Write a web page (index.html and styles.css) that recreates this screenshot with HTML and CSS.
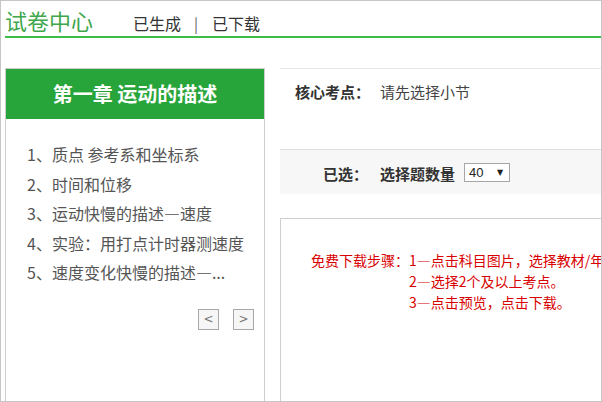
FILE: index.html
```html
<!DOCTYPE html>
<html lang="zh-CN">
<head>
<meta charset="utf-8">
<title>试卷中心</title>
<link rel="stylesheet" href="styles.css">
</head>
<body>
<div class="frame">
  <div class="header">
    <span class="brand">试卷中心</span>
    <a class="nav-link">已生成</a>
    <span class="sep">|</span>
    <a class="nav-link">已下载</a>
  </div>
  <div class="main">
    <div class="chapter">
      <div class="chapter-title">第一章 运动的描述</div>
      <ul class="sections">
        <li>1、质点 参考系和坐标系</li>
        <li>2、时间和位移</li>
        <li>3、运动快慢的描述—速度</li>
        <li>4、实验：用打点计时器测速度</li>
        <li>5、速度变化快慢的描述—...</li>
      </ul>
      <div class="pager">
        <span class="page-btn">&lt;</span>
        <span class="page-btn">&gt;</span>
      </div>
    </div>
    <div class="content">
      <div class="points">
        <span class="label">核心考点：</span>
        <span class="value">请先选择小节</span>
      </div>
      <div class="selected">
        <span class="label">已选：</span>
        <span class="label count">选择题数量</span>
        <span class="select"><span>40</span><span class="arrow">▼</span></span>
      </div>
      <div class="result">
        <div class="steps">
          <span class="steps-title">免费下载步骤：</span>
          <div class="steps-list">
            <div>1—点击科目图片，选择教材/年级，选择章节。</div>
            <div>2—选择2个及以上考点。</div>
            <div>3—点击预览，点击下载。</div>
          </div>
        </div>
      </div>
    </div>
  </div>
</div>
</body>
</html>
```

FILE: styles.css
```css
* { box-sizing: border-box; }
html, body { margin: 0; padding: 0; background: #fff; }
body {
  font-family: "Noto Sans CJK SC", "Noto Sans", sans-serif;
  color: #333;
}
.frame {
  width: 602px;
  height: 402px;
  border: 1px solid #c6c6c6;
  overflow: hidden;
}
.header {
  margin-left: 4px;
  height: 37px;
  padding-top: 4px;
  border-bottom: 2px solid #3dbd46;
  display: flex;
  align-items: baseline;
}
.brand {
  font-size: 22px;
  line-height: 30px;
  color: #3ea64b;
}
.nav-link {
  font-size: 16px;
  color: #333;
  line-height: 30px;
}
.brand + .nav-link { margin-left: 40px; }
.sep {
  font-size: 15px;
  color: #666;
  margin: 0 14px 0 13px;
}
.main {
  display: flex;
  margin-top: 30px;
  margin-left: 4px;
}
.chapter {
  width: 260px;
  flex-shrink: 0;
  border: 1px solid #cdcdcd;
}
.chapter-title {
  height: 50px;
  line-height: 50px;
  background: #28a53a;
  color: #fff;
  font-size: 20px;
  font-weight: bold;
  text-align: center;
}
.sections {
  list-style: none;
  margin: 0;
  padding: 21px 0 0 21px;
}
.sections li {
  font-size: 16px;
  line-height: 29.5px;
  height: 29.5px;
  color: #555;
  white-space: nowrap;
}
.pager {
  display: flex;
  justify-content: flex-end;
  gap: 14px;
  padding: 21.5px 10px 11px 0;
}
.page-btn {
  width: 21px;
  height: 21px;
  border: 1px solid #a8a8a8;
  background: #f6f6f6;
  color: #777;
  font-size: 12px;
  line-height: 19px;
  text-align: center;
  font-family: "DejaVu Sans", sans-serif;
}
.content {
  margin-left: 15px;
  width: 420px;
  flex-shrink: 0;
}
.points {
  height: 81px;
  border-top: 1px solid #e6e6e6;
  padding: 13px 0 0 15px;
  display: flex;
  line-height: 20px;
  font-size: 15px;
}
.points .label { font-weight: bold; color: #333; width: 85px; }
.points .value { color: #444; }
.selected {
  height: 45px;
  border-top: 1px solid #dedede;
  background: #f7f7f7;
  display: flex;
  align-items: center;
  padding-left: 43px;
  font-size: 15px;
}
.selected .label { font-weight: bold; color: #333; line-height: 20px; margin-top: 3px; }
.selected .count { margin-left: 12px; }
.select {
  margin-left: 9px;
  width: 46px;
  height: 19px;
  border: 1px solid #a6a6a6;
  background: #fff;
  display: flex;
  align-items: center;
  justify-content: space-between;
  padding: 0 6px 0 4px;
  font-size: 13px;
  font-family: "Liberation Sans", sans-serif;
  color: #222;
}
.select .arrow { font-size: 8px; color: #222; font-family: "DejaVu Sans", sans-serif; }
.result {
  margin-top: 24px;
  height: 260px;
  border-top: 1px solid #cfcfcf;
  border-left: 1px solid #cfcfcf;
  padding: 31px 0 0 30px;
}
.steps {
  display: flex;
  font-size: 14px;
  line-height: 21px;
  color: #d80000;
  white-space: nowrap;
}
.steps-title { width: 98px; flex-shrink: 0; }
```
